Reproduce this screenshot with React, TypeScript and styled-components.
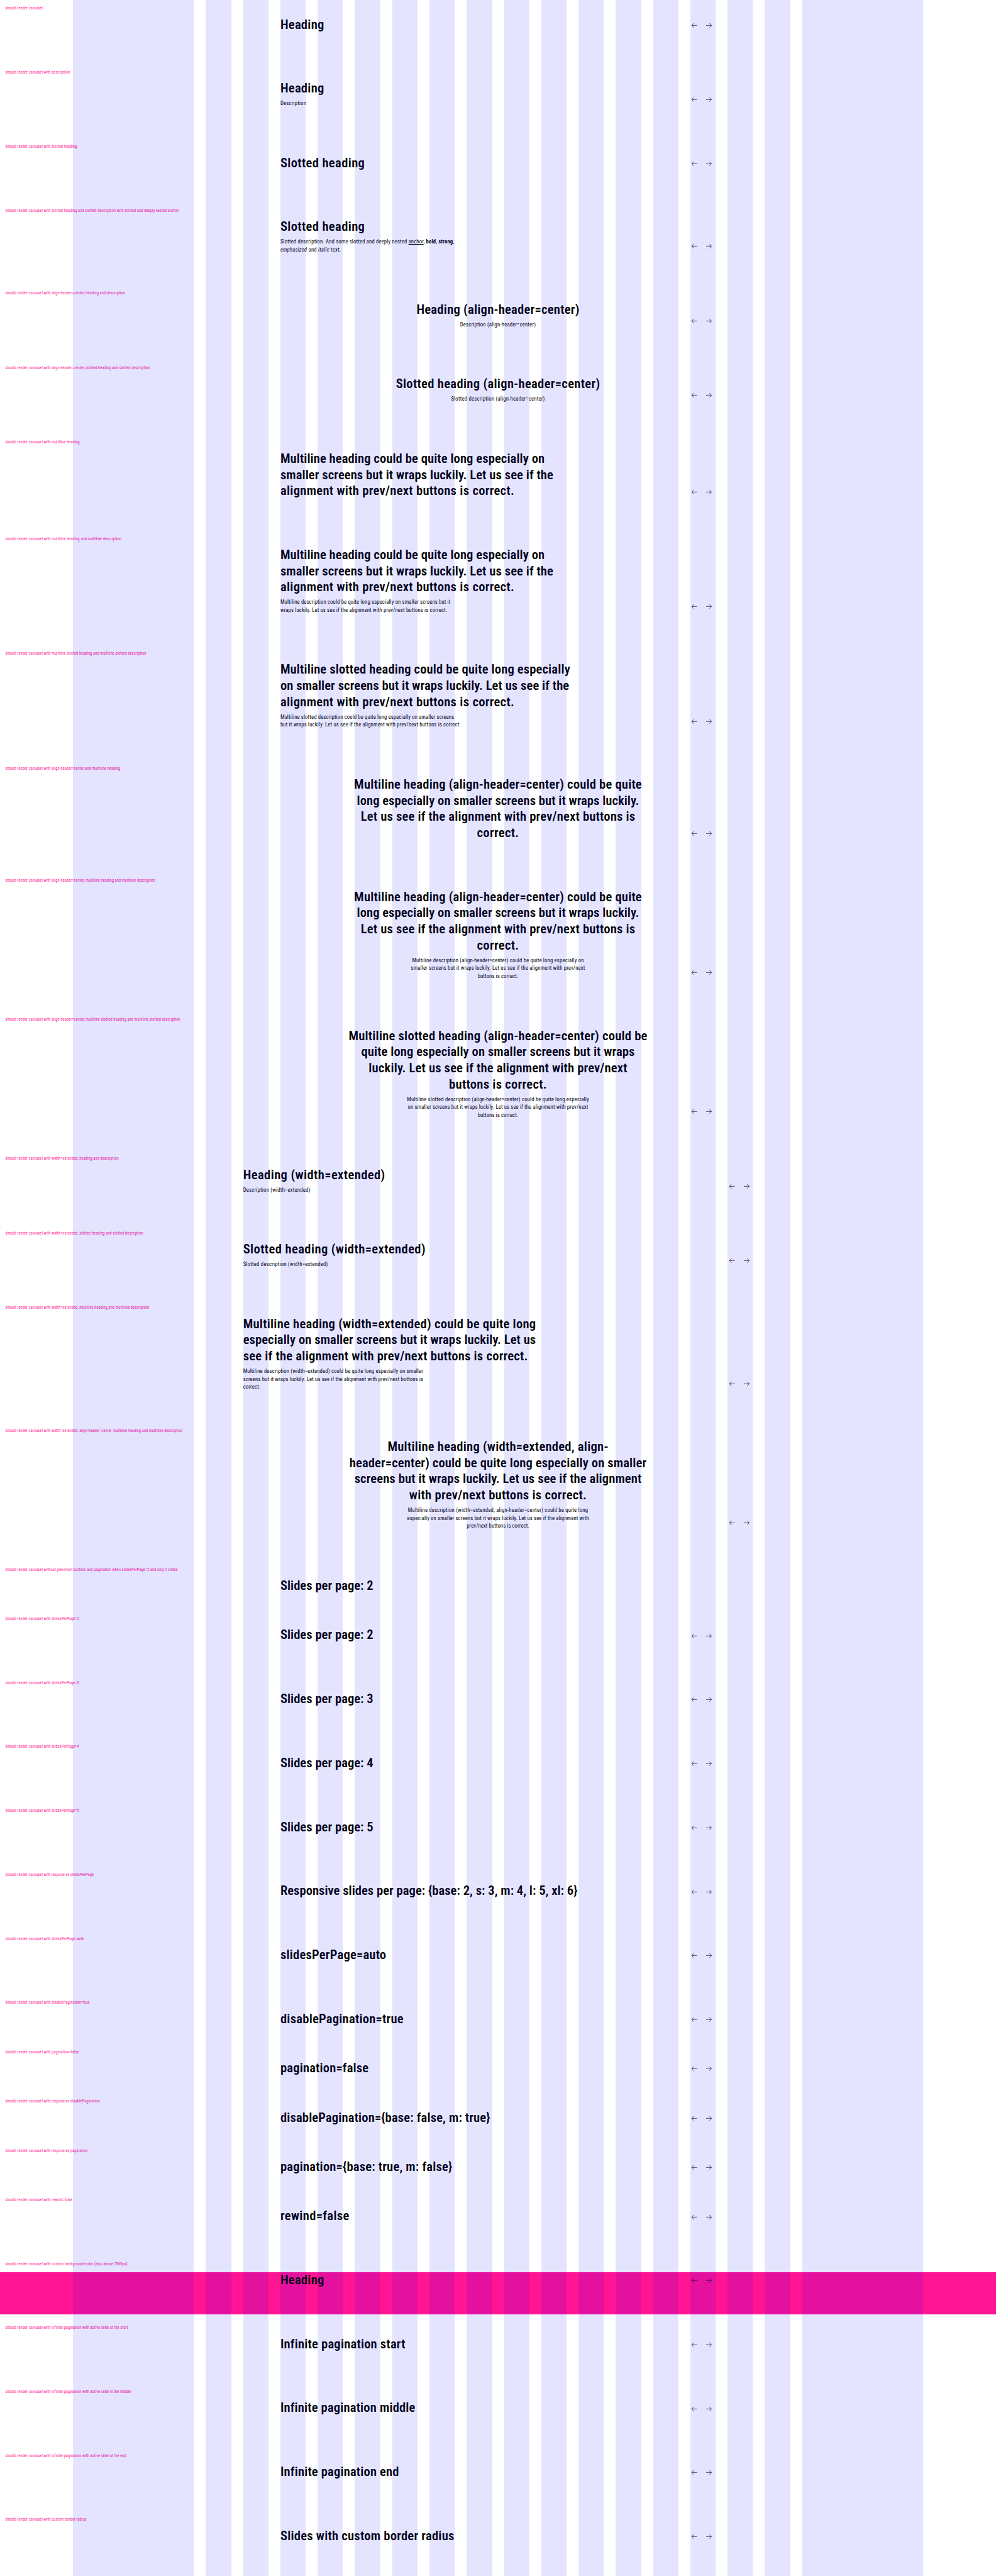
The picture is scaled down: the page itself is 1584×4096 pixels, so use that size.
import React from "react";
import styled, { createGlobalStyle } from "styled-components";

/* Design values are authored for a 3000px wide canvas and scaled down. */
const SCALE = 0.528;
const s = (n: number) => `${+(n * SCALE).toFixed(3)}px`;

const INK = "#010205";
const PINK = "#ff1493";

const GlobalStyle = createGlobalStyle`
  html, body { margin: 0; padding: 0; background: #fff; }
  body { font-family: "Roboto Condensed", Roboto, "Liberation Sans", sans-serif; font-stretch: 75%; color: ${INK}; }
`;

const Page = styled.main`
  position: relative;
  width: 1584px;
  height: 4096px;
  overflow: hidden;
  background: #fff;
`;

const GridOverlay = styled.div`
  position: absolute;
  inset: 0;
  display: grid;
  grid-template-columns: ${s(364)} repeat(16, minmax(0, 1fr)) ${s(364)};
  column-gap: ${s(36)};
  padding: 0 ${s(220)};
  pointer-events: none;
`;

const GridColumn = styled.span`
  background: rgba(0, 0, 255, 0.106);
`;

const Example = styled.section`
  display: flex;
  flex-direction: column;
  padding-bottom: ${s(15.4)};
`;

const Label = styled.p`
  box-sizing: border-box;
  height: ${s(49.4)};
  margin: 0;
  padding: ${s(17.3)} 0 0 ${s(16)};
  font-size: ${s(12)};
  line-height: ${s(16)};
  letter-spacing: ${s(0.22)};
  white-space: nowrap;
  color: ${PINK};
`;

const Carousel = styled.div<{ $fill?: string }>`
  background: ${(p) => p.$fill ?? "transparent"};
`;

const Header = styled.header<{ $extended?: boolean }>`
  display: grid;
  grid-template-columns: minmax(0, 1fr) auto;
  align-items: end;
  padding: ${s(0.8)} ${(p) => s(p.$extended ? 732.25 : 844.5)} 0;
`;

const Titles = styled.div<{ $center?: boolean }>`
  grid-area: 1 / 1 / 2 / 3;
  display: flex;
  flex-direction: column;
  gap: ${s(8)};
  align-items: ${(p) => (p.$center ? "center" : "flex-start")};
`;

const TextBlock = styled.div<{ $center?: boolean }>`
  display: flex;
  flex-direction: column;
  align-items: ${(p) => (p.$center ? "center" : "flex-start")};
  margin: 0;
  white-space: nowrap;
`;

const Heading = styled(TextBlock)`
  font-size: ${s(39)};
  font-weight: 600;
  line-height: ${s(48.62)};
`;

const Description = styled(TextBlock)`
  font-size: ${s(16.3)};
  line-height: ${s(24)};

  a { color: inherit; text-decoration: underline; }
`;

const LineBox = styled.span`
  display: block;
  width: max-content;
`;

const Nav = styled.nav`
  grid-area: 1 / 2 / 2 / 3;
  display: flex;
  height: ${s(44)};
  margin: 0 ${s(-2.5)} ${s(0.8)} 0;
`;

const NavButton = styled.button`
  display: grid;
  place-items: center;
  width: ${s(44)};
  height: ${s(44)};
  padding: 0;
  border: 0;
  background: none;
  color: ${INK};
`;

const Slides = styled.div<{ $paginated: boolean }>`
  height: ${(p) => s(p.$paginated ? 78.4 : 34.4)};
`;

function Arrow({ flip }: { flip?: boolean }) {
  return (
    <svg width={24 * SCALE} height={24 * SCALE} viewBox="0 0 24 24" fill="none" stroke="currentColor" strokeWidth="1.3">
      <path d={flip ? "M20 12H4M10 5.5 4.3 12l5.7 6.5" : "M4 12h16M14 5.5l5.7 6.5-5.7 6.5"} />
    </svg>
  );
}

/* A line of copy and the measure it is tracked out to, in design pixels. */
type Copy = [text: React.ReactNode, measure: number];

function Line({ copy: [text, measure], bearing }: { copy: Copy; bearing: number }) {
  const ref = React.useRef<HTMLSpanElement>(null);
  const [tracking, setTracking] = React.useState(0);

  React.useLayoutEffect(() => {
    const el = ref.current;
    if (!el) return;
    el.style.letterSpacing = "0px";
    const natural = el.getBoundingClientRect().width;
    const letters = el.textContent?.length ?? 1;
    const value = ((measure + bearing) * SCALE - natural) / letters;
    el.style.letterSpacing = `${value}px`;
    setTracking(value);
  }, [measure, bearing]);

  return (
    <LineBox ref={ref} style={{ letterSpacing: tracking }}>
      {text}
    </LineBox>
  );
}

type Story = {
  label: string;
  heading: Copy[];
  description?: Copy[];
  center?: boolean;
  extended?: boolean;
  nav?: boolean;
  paginated?: boolean;
  fill?: string;
};

const stories: Story[] = [
  { label: "", heading: [["Heading", 129]] },
  { label: "with description", heading: [["Heading", 129]], description: [["Description", 76.5]] },
  { label: "with slotted heading", heading: [["Slotted heading", 251.5]] },
  {
    label: "with slotted heading and slotted description with slotted and deeply nested anchor",
    heading: [["Slotted heading", 251.5]],
    description: [
      [
        <>
          Slotted description. And some slotted and deeply nested <a>anchor</a>, <b>bold</b>, <strong>strong</strong>,
        </>,
        522,
      ],
      [
        <>
          <em>emphasized</em> and <i>italic</i> text.
        </>,
        181.5,
      ],
    ],
  },
  {
    label: "with align-header=center, heading and description",
    heading: [["Heading (align-header=center)", 488]],
    description: [["Description (align-header=center)", 227]],
    center: true,
  },
  {
    label: "with align-header=center, slotted heading and slotted description",
    heading: [["Slotted heading (align-header=center)", 612]],
    description: [["Slotted description (align-header=center)", 281]],
    center: true,
  },
  {
    label: "with multiline heading",
    heading: [
      ["Multiline heading could be quite long especially on", 793],
      ["smaller screens but it wraps luckily. Let us see if the", 819],
      ["alignment with prev/next buttons is correct.", 702],
    ],
  },
  {
    label: "with multiline heading and multiline description",
    heading: [
      ["Multiline heading could be quite long especially on", 793],
      ["smaller screens but it wraps luckily. Let us see if the", 819],
      ["alignment with prev/next buttons is correct.", 702],
    ],
    description: [
      ["Multiline description could be quite long especially on smaller screens but it", 511],
      ["wraps luckily. Let us see if the alignment with prev/next buttons is correct.", 501],
    ],
  },
  {
    label: "with multiline slotted heading and multiline slotted description",
    heading: [
      ["Multiline slotted heading could be quite long especially", 870],
      ["on smaller screens but it wraps luckily. Let us see if the", 867],
      ["alignment with prev/next buttons is correct.", 702],
    ],
    description: [
      ["Multiline slotted description could be quite long especially on smaller screens", 522],
      ["but it wraps luckily. Let us see if the alignment with prev/next buttons is correct.", 542],
    ],
  },
  {
    label: "with align-header=center and multiline heading",
    heading: [
      ["Multiline heading (align-header=center) could be quite", 864],
      ["long especially on smaller screens but it wraps luckily.", 847],
      ["Let us see if the alignment with prev/next buttons is", 824],
      ["correct.", 124],
    ],
    center: true,
  },
  {
    label: "with align-header=center, multiline heading and multiline description",
    heading: [
      ["Multiline heading (align-header=center) could be quite", 864],
      ["long especially on smaller screens but it wraps luckily.", 847],
      ["Let us see if the alignment with prev/next buttons is", 824],
      ["correct.", 124],
    ],
    description: [
      ["Multiline description (align-header=center) could be quite long especially on", 516],
      ["smaller screens but it wraps luckily. Let us see if the alignment with prev/next", 523],
      ["buttons is correct.", 121],
    ],
    center: true,
  },
  {
    label: "with align-header=center, multiline slotted heading and multiline slotted description",
    heading: [
      ["Multiline slotted heading (align-header=center) could be", 897],
      ["quite long especially on smaller screens but it wraps", 821],
      ["luckily. Let us see if the alignment with prev/next", 776],
      ["buttons is correct.", 292],
    ],
    description: [
      ["Multiline slotted description (align-header=center) could be quite long especially", 547],
      ["on smaller screens but it wraps luckily. Let us see if the alignment with prev/next", 542],
      ["buttons is correct.", 121],
    ],
    center: true,
  },
  {
    label: "with width=extended, heading and description",
    heading: [["Heading (width=extended)", 425]],
    description: [["Description (width=extended)", 201]],
    extended: true,
  },
  {
    label: "with width=extended, slotted heading and slotted description",
    heading: [["Slotted heading (width=extended)", 547]],
    description: [["Slotted description (width=extended)", 254]],
    extended: true,
  },
  {
    label: "with width=extended, multiline heading and multiline description",
    heading: [
      ["Multiline heading (width=extended) could be quite long", 879],
      ["especially on smaller screens but it wraps luckily. Let us", 879],
      ["see if the alignment with prev/next buttons is correct.", 855],
    ],
    description: [
      ["Multiline description (width=extended) could be quite long especially on smaller", 541],
      ["screens but it wraps luckily. Let us see if the alignment with prev/next buttons is", 541],
      ["correct.", 51],
    ],
    extended: true,
  },
  {
    label: "with width=extended, align-header=center multiline heading and multiline description",
    heading: [
      ["Multiline heading (width=extended, align-", 662],
      ["header=center) could be quite long especially on smaller", 892],
      ["screens but it wraps luckily. Let us see if the alignment", 862],
      ["with prev/next buttons is correct.", 532],
    ],
    description: [
      ["Multiline description (width=extended, align-header=center) could be quite long", 541],
      ["especially on smaller screens but it wraps luckily. Let us see if the alignment with", 546],
      ["prev/next buttons is correct.", 187],
    ],
    center: true,
    extended: true,
  },
  {
    label: "without prev/next buttons and pagination when slidesPerPage=2 and only 2 slides",
    heading: [["Slides per page: 2", 277]],
    nav: false,
    paginated: false,
  },
  { label: "with slidesPerPage=2", heading: [["Slides per page: 2", 277]] },
  { label: "with slidesPerPage=3", heading: [["Slides per page: 3", 277]] },
  { label: "with slidesPerPage=4", heading: [["Slides per page: 4", 277]] },
  { label: "with slidesPerPage=5", heading: [["Slides per page: 5", 277]] },
  {
    label: "with responsive slidesPerPage",
    heading: [["Responsive slides per page: {base: 2, s: 3, m: 4, l: 5, xl: 6}", 892]],
  },
  { label: "with slidesPerPage=auto", heading: [["slidesPerPage=auto", 316]] },
  { label: "with disablePagination=true", heading: [["disablePagination=true", 368]], paginated: false },
  { label: "with pagination=false", heading: [["pagination=false", 263]], paginated: false },
  {
    label: "with responsive disablePagination",
    heading: [["disablePagination={base: false, m: true}", 629]],
    paginated: false,
  },
  {
    label: "with responsive pagination",
    heading: [["pagination={base: true, m: false}", 515]],
    paginated: false,
  },
  { label: "with rewind=false", heading: [["rewind=false", 205]] },
  { label: "with custom background-color (also above 2560px)", heading: [["Heading", 129]], fill: PINK },
  {
    label: "with infinite pagination with active slide at the start",
    heading: [["Infinite pagination start", 372]],
  },
  {
    label: "with infinite pagination with active slide in the middle",
    heading: [["Infinite pagination middle", 402]],
  },
  { label: "with infinite pagination with active slide at the end", heading: [["Infinite pagination end", 353]] },
  { label: "with custom border-radius", heading: [["Slides with custom border radius", 521]] },
];

function CarouselExample({ story }: { story: Story }) {
  const { label, heading, description, center, extended, nav = true, paginated = true, fill } = story;
  return (
    <Example>
      <Label>{`should render carousel ${label}`.trim()}</Label>
      <Carousel $fill={fill}>
        <Header $extended={extended}>
          <Titles $center={center}>
            <Heading as="h2" $center={center}>
              {heading.map((copy, i) => (
                <Line key={i} copy={copy} bearing={3} />
              ))}
            </Heading>
            {description && (
              <Description as="p" $center={center}>
                {description.map((copy, i) => (
                  <Line key={i} copy={copy} bearing={1.5} />
                ))}
              </Description>
            )}
          </Titles>
          {nav && (
            <Nav>
              <NavButton aria-label="Previous slide">
                <Arrow flip />
              </NavButton>
              <NavButton aria-label="Next slide">
                <Arrow />
              </NavButton>
            </Nav>
          )}
        </Header>
        <Slides $paginated={paginated} />
      </Carousel>
    </Example>
  );
}

export default function App() {
  return (
    <Page>
      <GlobalStyle />
      {stories.map((story, i) => (
        <CarouselExample key={i} story={story} />
      ))}
      <GridOverlay aria-hidden="true">
        {Array.from({ length: 18 }, (_, i) => (
          <GridColumn key={i} />
        ))}
      </GridOverlay>
    </Page>
  );
}
